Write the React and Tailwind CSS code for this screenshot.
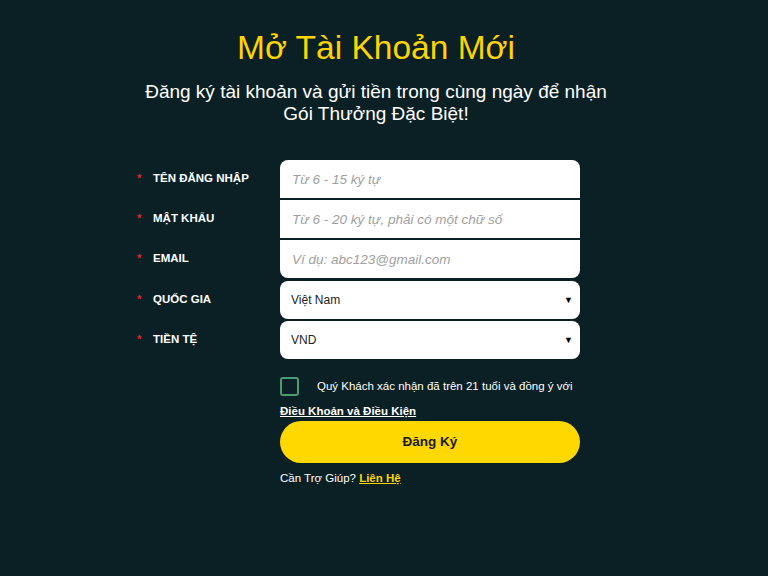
import { useState } from "react";

const fields = [
  { label: "TÊN ĐĂNG NHẬP", placeholder: "Từ 6 - 15 ký tự", round: "rounded-t-lg" },
  { label: "MẬT KHẨU", placeholder: "Từ 6 - 20 ký tự, phải có một chữ số", round: "" },
  { label: "EMAIL", placeholder: "Ví dụ: abc123@gmail.com", round: "rounded-b-lg" },
];

const selects = [
  { label: "QUỐC GIA", value: "Việt Nam", options: ["Việt Nam"] },
  { label: "TIỀN TỆ", value: "VND", options: ["VND"] },
];

function Label({ text }) {
  return (
    <div className="w-[143px] flex items-center text-[11.5px] font-bold text-white">
      <span className="w-[16px] text-[#e0282e]">*</span>
      {text}
    </div>
  );
}

export default function App() {
  const [agree, setAgree] = useState(false);

  return (
    <div
      className="min-h-[576px] bg-[#0b2024] pt-[28px] text-white"
      style={{ fontFamily: '"Liberation Sans", Arial, sans-serif' }}
    >
      {/* Tiêu đề */}
      <div className="pr-[16px]">
        <h1 className="text-center text-[33.5px] leading-[40px] text-[#ffd400]">
          Mở Tài Khoản Mới
        </h1>
        <p className="mt-[13px] text-center text-[19px] leading-[22px] text-white">
          Đăng ký tài khoản và gửi tiền trong cùng ngày để nhận
          <br />
          Gói Thưởng Đặc Biệt!
        </p>
      </div>

      <div className="mx-auto mt-[35px] w-[494px]">
        {/* Inputs */}
        <div className="flex flex-col gap-[2px]">
          {fields.map((f) => (
            <div key={f.label} className="flex">
              <Label text={f.label} />
              <input
                type="text"
                placeholder={f.placeholder}
                className={`h-[38px] w-[300px] bg-white px-[12px] text-[13.5px] italic text-gray-800 outline-none placeholder:text-[#a0a0a0] ${f.round}`}
              />
            </div>
          ))}
        </div>

        {/* Selects */}
        <div className="mt-[3px] flex flex-col gap-[2px]">
          {selects.map((s) => (
            <div key={s.label} className="flex">
              <Label text={s.label} />
              <div className="relative h-[38px] w-[300px] rounded-lg bg-white">
                <select
                  defaultValue={s.value}
                  className="h-full w-full appearance-none rounded-lg bg-transparent px-[11px] text-[12px] text-[#222] outline-none"
                >
                  {s.options.map((o) => (
                    <option key={o}>{o}</option>
                  ))}
                </select>
                <span className="pointer-events-none absolute right-[7px] top-[13px] text-[9px] text-black">
                  ▼
                </span>
              </div>
            </div>
          ))}
        </div>

        {/* Điều khoản */}
        <div className="ml-[143px] w-[300px]">
          <label className="mt-[18px] flex items-center">
            <span
              onClick={() => setAgree(!agree)}
              className={`h-[19px] w-[19px] shrink-0 rounded-[3px] border-2 border-[#4e9a74] ${agree ? "bg-[#4e9a74]" : ""}`}
            />
            <span className="ml-[18px] whitespace-nowrap text-[11.5px] text-white">
              Quý Khách xác nhận đã trên 21 tuổi và đồng ý với
            </span>
          </label>
          <a href="#" className="mt-[8px] block text-[11.5px] font-bold leading-[14px] text-white underline">
            Điều Khoản và Điều Kiện
          </a>
          <button className="mt-[3px] h-[42px] w-full rounded-full bg-[#ffd800] text-[13.5px] font-bold text-[#1a1a1a]">
            Đăng Ký
          </button>
          <p className="mt-[7px] text-[11.5px] text-white">
            Cần Trợ Giúp?{" "}
            <a href="#" className="font-bold text-[#ffd400] underline">
              Liên Hệ
            </a>
          </p>
        </div>
      </div>
    </div>
  );
}
